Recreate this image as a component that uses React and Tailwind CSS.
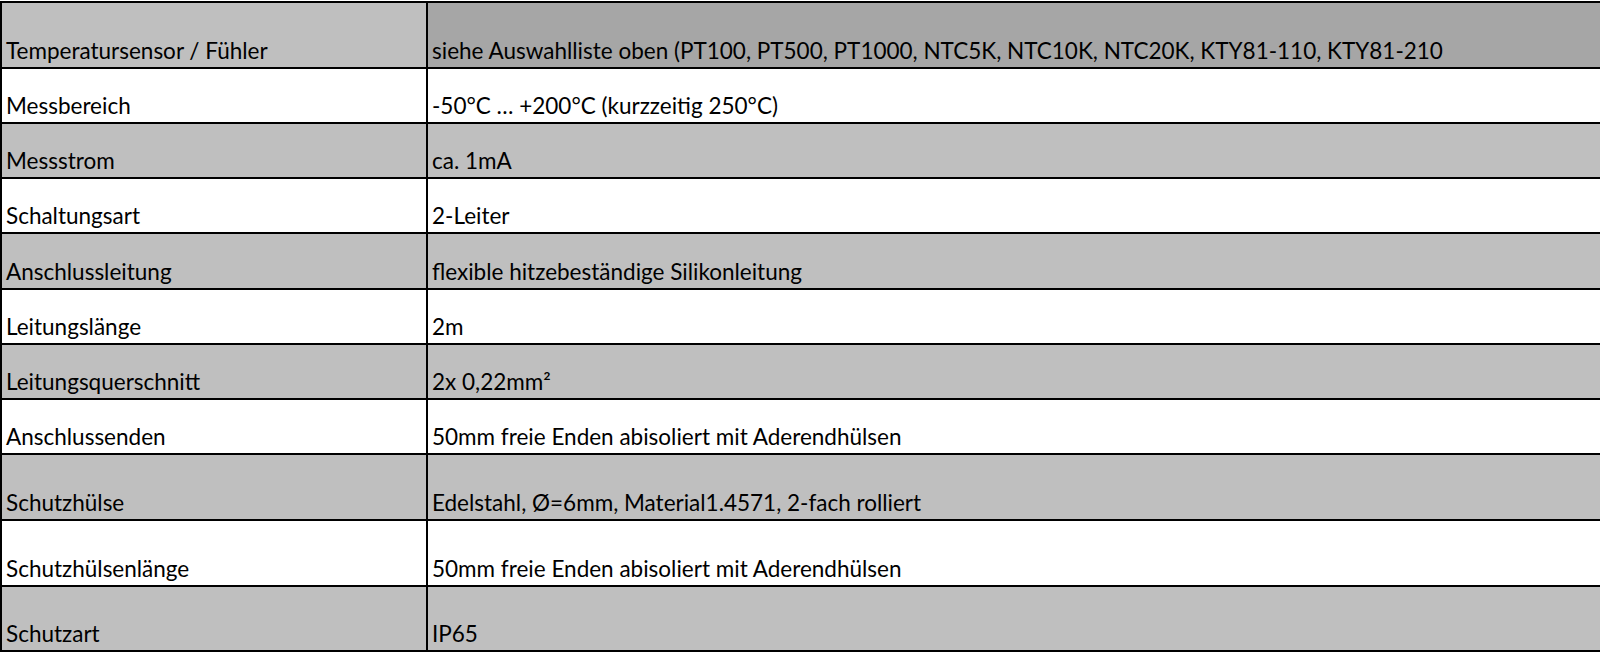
import React from 'react';

const rows = [
  { label: 'Temperatursensor / Fühler', value: 'siehe Auswahlliste oben (PT100, PT500, PT1000, NTC5K, NTC10K, NTC20K, KTY81-110, KTY81-210', h: 'h-[66px]', left: 'bg-[#bfbfbf]', right: 'bg-[#a6a6a6]' },
  { label: 'Messbereich', value: '-50°C … +200°C (kurzzeitig 250°C)', h: 'h-[55px]', left: 'bg-white', right: 'bg-white' },
  { label: 'Messstrom', value: 'ca. 1mA', h: 'h-[55px]', left: 'bg-[#bfbfbf]', right: 'bg-[#bfbfbf]' },
  { label: 'Schaltungsart', value: '2-Leiter', h: 'h-[55px]', left: 'bg-white', right: 'bg-white' },
  { label: 'Anschlussleitung', value: 'flexible hitzebeständige Silikonleitung', h: 'h-[56px]', left: 'bg-[#bfbfbf]', right: 'bg-[#bfbfbf]' },
  { label: 'Leitungslänge', value: '2m', h: 'h-[55px]', left: 'bg-white', right: 'bg-white' },
  { label: 'Leitungsquerschnitt', value: '2x 0,22mm²', h: 'h-[55px]', left: 'bg-[#bfbfbf]', right: 'bg-[#bfbfbf]' },
  { label: 'Anschlussenden', value: '50mm freie Enden abisoliert mit Aderendhülsen', h: 'h-[55px]', left: 'bg-white', right: 'bg-white' },
  { label: 'Schutzhülse', value: 'Edelstahl, Ø=6mm, Material1.4571, 2-fach rolliert', h: 'h-[66px]', left: 'bg-[#bfbfbf]', right: 'bg-[#bfbfbf]' },
  { label: 'Schutzhülsenlänge', value: '50mm freie Enden abisoliert mit Aderendhülsen', h: 'h-[66px]', left: 'bg-white', right: 'bg-white' },
  { label: 'Schutzart', value: 'IP65', h: 'h-[65px]', left: 'bg-[#bfbfbf]', right: 'bg-[#bfbfbf]' },
];

export default function App() {
  return (
    <div className="h-[653px] w-[1600px] overflow-hidden bg-white pt-px text-[22.5px] leading-none text-black [font-family:Lato,'Liberation_Sans',sans-serif]">
      <div className="border-t-2 border-l-2 border-black">
        {rows.map((r) => (
          <div key={r.label} className={'flex border-b-2 border-black ' + r.h}>
            <div className={'flex w-[426px] shrink-0 items-end border-r-2 border-black pb-[5px] pl-[4px] ' + r.left}>
              {r.label}
            </div>
            <div className={'flex flex-1 items-end pb-[5px] pl-[4px] whitespace-nowrap ' + r.right}>
              {r.value}
            </div>
          </div>
        ))}
      </div>
    </div>
  );
}
